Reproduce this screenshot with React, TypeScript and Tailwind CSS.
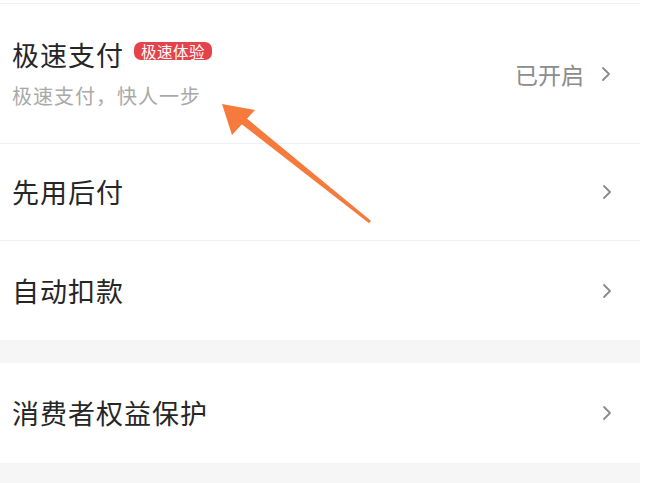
import React from "react";

const font = { fontFamily: '"Noto Sans CJK SC", "Noto Sans", sans-serif' };

function Chevron() {
  return (
    <svg width="12" height="16" viewBox="0 0 12 16" className="shrink-0">
      <polyline points="3,2 9,8 3,14" fill="none" stroke="#8a8a8a" strokeWidth="1.8" strokeLinecap="round" strokeLinejoin="round" />
    </svg>
  );
}

function Row({ title, height, last }: { title: string; height: string; last?: boolean }) {
  return (
    <div className={`flex items-center justify-between bg-white pl-[12px] pr-[27px] ${height} ${last ? "" : "border-b border-[#efefef]"}`}>
      <span className="text-[27px] leading-[34px] tracking-[1px] text-[#262626]">{title}</span>
      <Chevron />
    </div>
  );
}

export default function App() {
  return (
    <div className="relative w-[657px] h-[483px] overflow-hidden bg-white" style={font}>
      <div className="w-[640px] h-full bg-[#f6f6f6]">
        <div className="h-[4px] bg-white border-b border-[#efefef]" />

        {/* 极速支付 */}
        <div className="flex h-[140px] items-center justify-between bg-white pl-[12px] pr-[28px] border-b border-[#efefef]">
          <div className="flex flex-col">
            <div className="flex items-center gap-[10px]">
              <span className="text-[27px] leading-[34px] tracking-[1px] text-[#262626]">极速支付</span>
              <span className="-mt-[8px] rounded-[7px] bg-[#e5434b] px-[7px] text-[15.5px] leading-[18px] tracking-[0.5px] text-white">
                极速体验
              </span>
            </div>
            <span className="mt-[11px] text-[20px] leading-[26px] tracking-[1px] text-[#a9a9a9]">极速支付，快人一步</span>
          </div>
          <div className="flex items-center gap-[16px]">
            <span className="text-[23px] leading-[30px] text-[#8c8c8c]">已开启</span>
            <Chevron />
          </div>
        </div>

        <Row title="先用后付" height="h-[97px]" />
        <Row title="自动扣款" height="h-[99px]" last />

        <div className="h-[23px]" />

        <Row title="消费者权益保护" height="h-[100px]" last />
      </div>

      {/* annotation arrow */}
      <svg className="absolute left-0 top-0 pointer-events-none" width="657" height="483" viewBox="0 0 657 483">
        <polygon points="222,104 255,110 232,135" fill="#f57a3c" />
        <polygon points="237.5,121 242.5,115 370.9,220.8 369.1,223.2" fill="#f57a3c" />
      </svg>
    </div>
  );
}
